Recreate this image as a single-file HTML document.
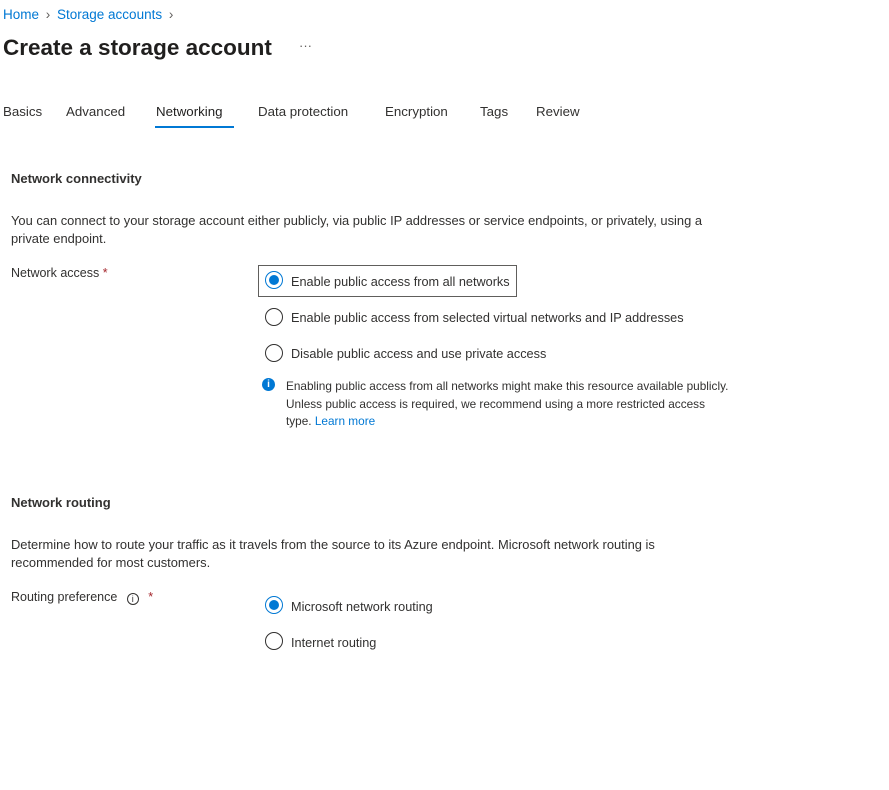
<!DOCTYPE html>
<html><head><meta charset="utf-8"><style>
*{margin:0;padding:0;box-sizing:border-box}
body{width:889px;height:790px;background:#fff;font-family:"Liberation Sans",sans-serif;color:#323130;position:relative;overflow:hidden;font-size:13px}
.a{position:absolute;white-space:nowrap}
.blue{color:#0078d4}
.radio{position:absolute;width:18px;height:18px;border:1.3px solid #323130;border-radius:50%;background:#fff}
.radio.on{border-color:#0078d4}
.radio.on::after{content:"";position:absolute;left:3px;top:3px;width:10px;height:10px;border-radius:50%;background:#0078d4}
.req{color:#a4262c}
.t{font-size:13.3px;top:104px}
</style></head><body>
<div class="a blue" style="left:3px;top:7px;font-size:13.5px">Home <span style="color:#605e5c;margin:0 3px">&#8250;</span> Storage accounts <span style="color:#605e5c;margin-left:3px">&#8250;</span></div>
<div class="a" style="left:3px;top:35px;font-size:22.5px;font-weight:600;color:#201f1e">Create a storage account</div>
<div class="a" style="left:299px;top:38px;font-size:13px;color:#605e5c">&middot;&middot;&middot;</div>
<div class="a t" style="left:3px">Basics</div>
<div class="a t" style="left:66px">Advanced</div>
<div class="a t" style="left:156px;color:#201f1e">Networking</div>
<div class="a" style="left:155px;top:126px;width:79px;height:2px;background:#0078d4"></div>
<div class="a t" style="left:258px">Data protection</div>
<div class="a t" style="left:385px">Encryption</div>
<div class="a t" style="left:480px">Tags</div>
<div class="a t" style="left:536px">Review</div>

<div class="a" style="left:11px;top:171px;font-weight:bold;font-size:13px">Network connectivity</div>
<div class="a" style="left:11px;top:212px;line-height:18px;font-size:12.9px">You can connect to your storage account either publicly, via public IP addresses or service endpoints, or privately, using a<br>private endpoint.</div>
<div class="a" style="left:11px;top:266px;font-size:12.5px">Network access <span class="req">*</span></div>

<div class="a" style="left:258px;top:265px;width:259px;height:32px;border:1px solid #605e5c"></div>
<div class="radio on" style="left:265px;top:271px"></div>
<div class="a" style="left:291px;top:275px;font-size:12.7px">Enable public access from all networks</div>
<div class="radio" style="left:265px;top:308px"></div>
<div class="a" style="left:291px;top:311px;font-size:12.7px">Enable public access from selected virtual networks and IP addresses</div>
<div class="radio" style="left:265px;top:344px"></div>
<div class="a" style="left:291px;top:347px;font-size:12.7px">Disable public access and use private access</div>
<div class="a" style="left:262px;top:378px;width:13px;height:13px;border-radius:50%;background:#0078d4;color:#fff;font-size:10px;font-weight:bold;text-align:center;line-height:13px">i</div>
<div class="a" style="left:286px;top:378px;line-height:17.5px;font-size:11.8px">Enabling public access from all networks might make this resource available publicly.<br>Unless public access is required, we recommend using a more restricted access<br>type. <span class="blue">Learn more</span></div>

<div class="a" style="left:11px;top:495px;font-weight:bold;font-size:13px">Network routing</div>
<div class="a" style="left:11px;top:536px;line-height:18px;font-size:12.9px">Determine how to route your traffic as it travels from the source to its Azure endpoint. Microsoft network routing is<br>recommended for most customers.</div>
<div class="a" style="left:11px;top:590px;font-size:12.5px">Routing preference <span style="display:inline-block;width:12px;height:12px;border:1px solid #323130;border-radius:50%;font-size:9px;text-align:center;line-height:10px;margin-left:6px;vertical-align:-1px">i</span> <span class="req" style="margin-left:6px">*</span></div>
<div class="radio on" style="left:265px;top:596px"></div>
<div class="a" style="left:291px;top:600px;font-size:12.7px">Microsoft network routing</div>
<div class="radio" style="left:265px;top:632px"></div>
<div class="a" style="left:291px;top:636px;font-size:12.7px">Internet routing</div>
</body></html>
